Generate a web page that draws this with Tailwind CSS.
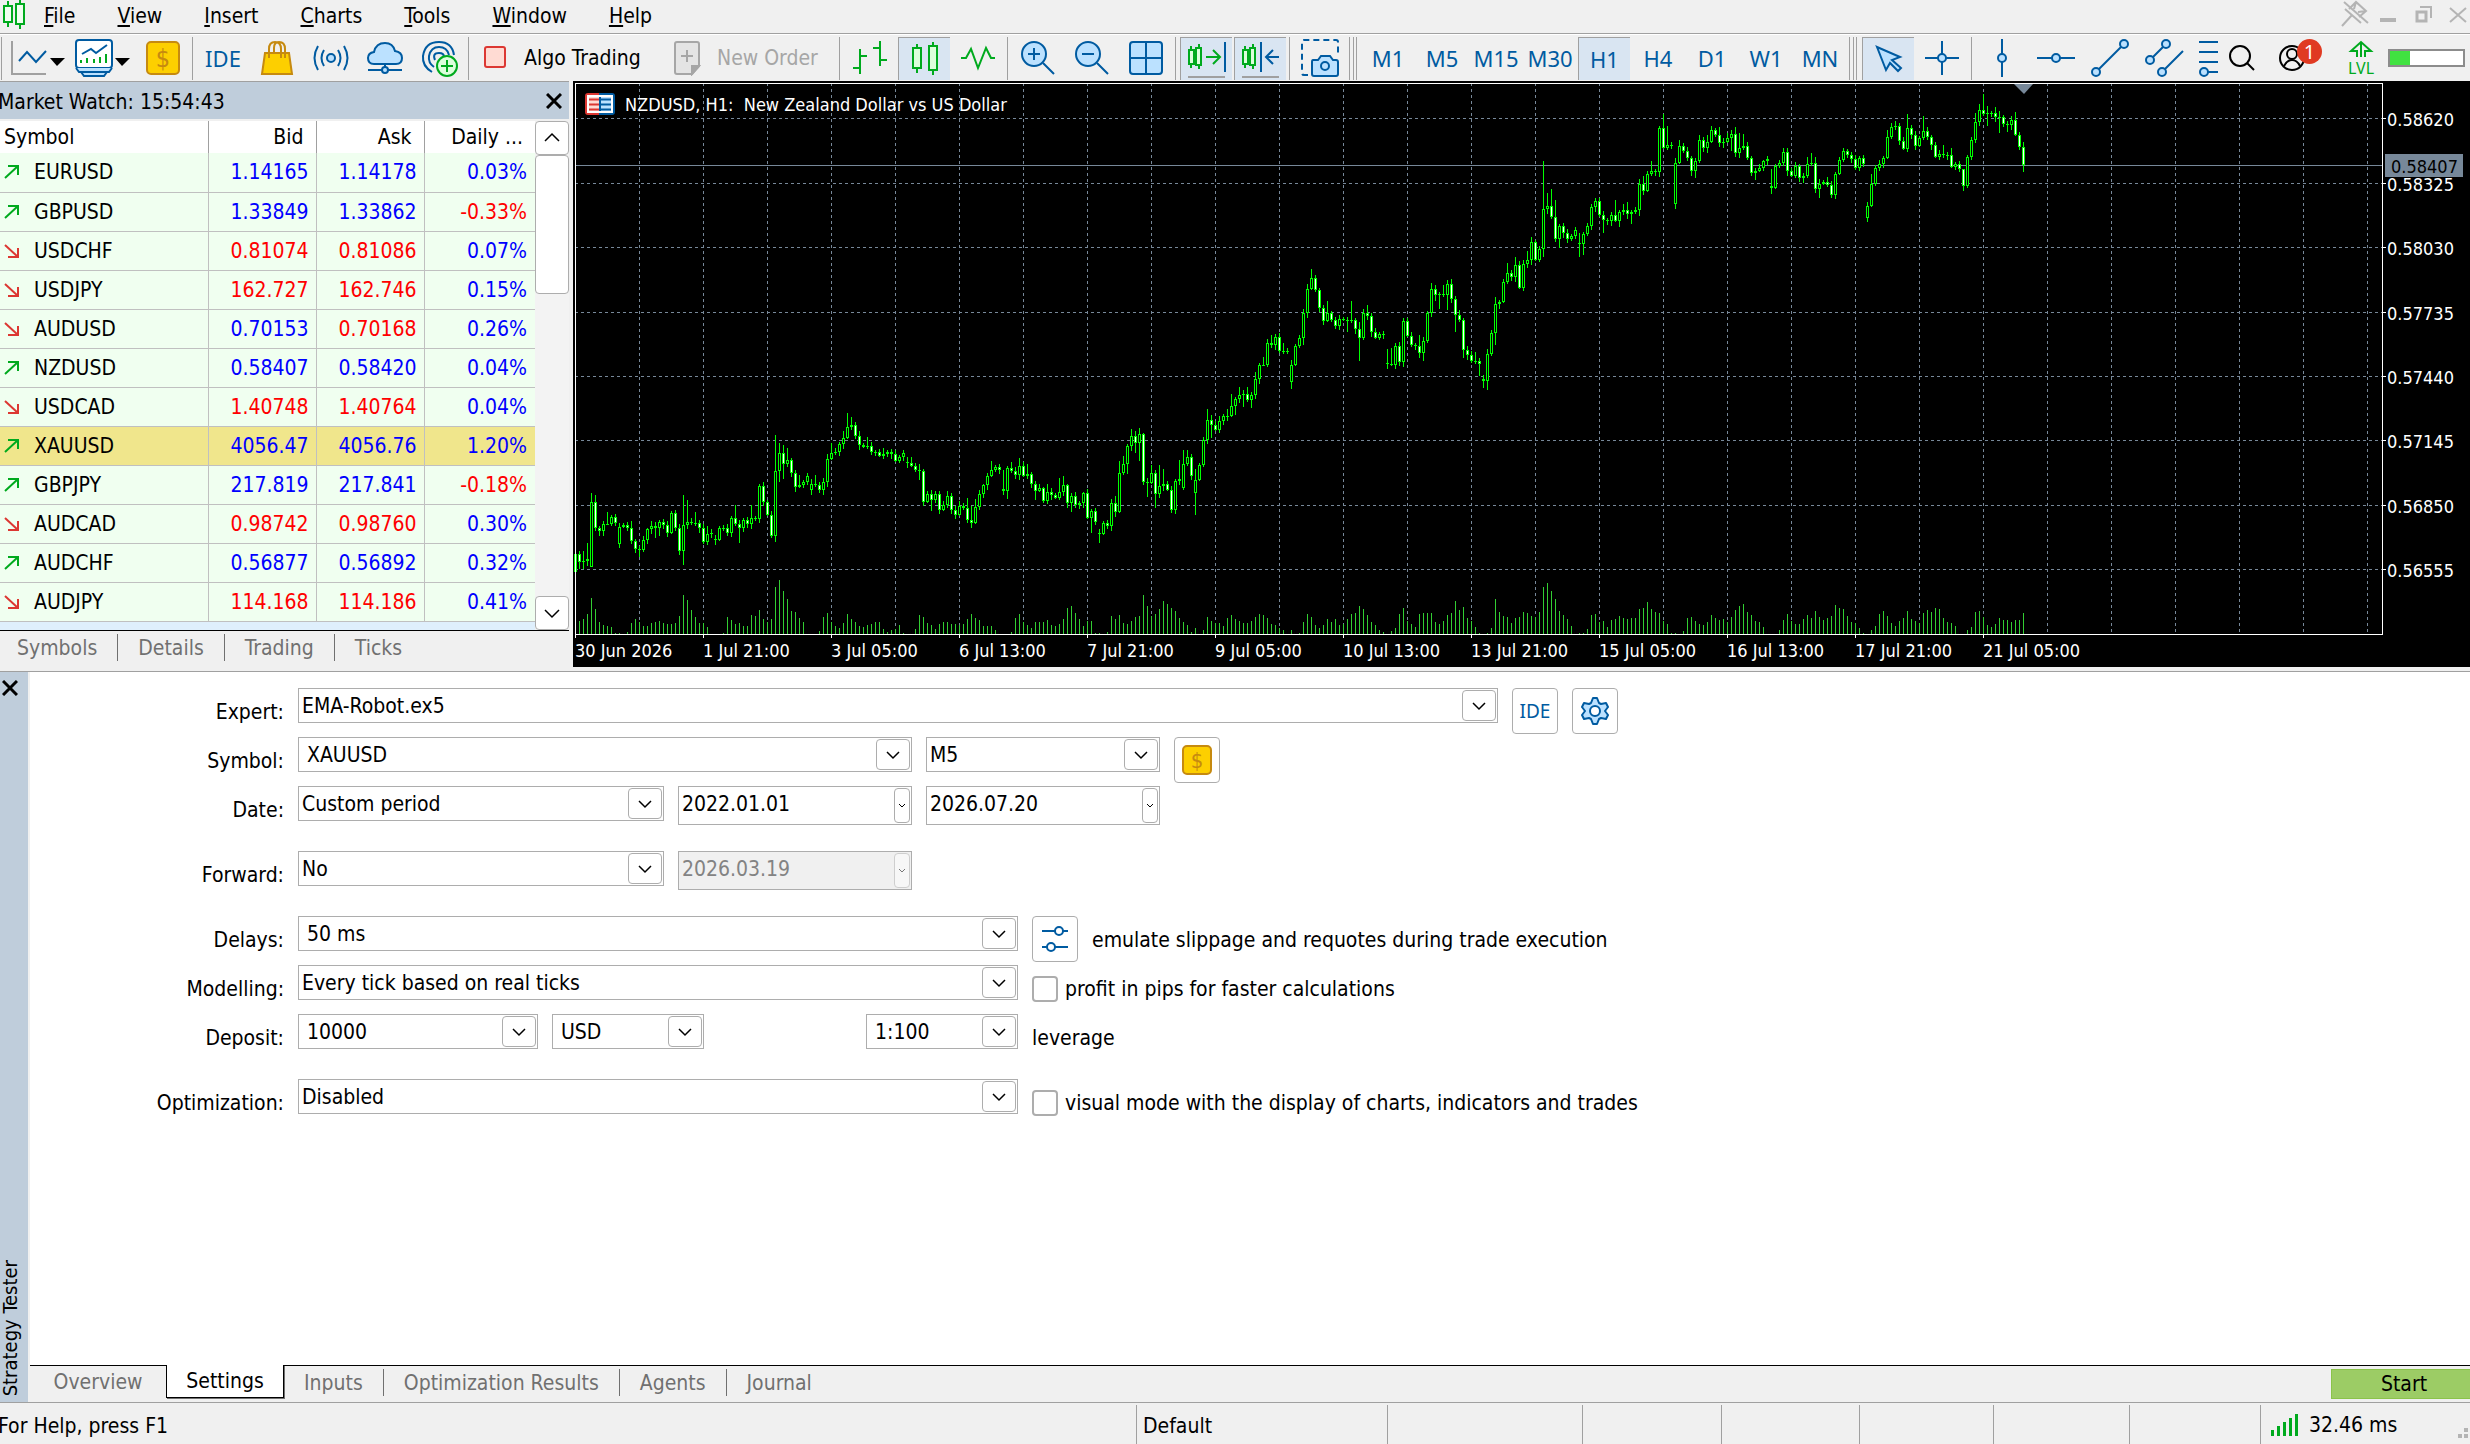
<!DOCTYPE html>
<html lang="en">

<head>
    <meta charset="utf-8" />
    <meta content="width=device-width, initial-scale=1.0" name="viewport" />
    <title>Trading Terminal</title>
    <script src="https://cdn.jsdelivr.net/npm/@tailwindcss/browser@4"></script>
</head>

<body class="h-screen flex flex-col overflow-hidden bg-[#f0f0f0] text-black text-[21px] leading-7 font-['DejaVu_Sans_Condensed','Noto_Sans',sans-serif]">

    <!-- Menu bar -->
    <header class="flex items-center h-[34px] shrink-0 border-b border-[#a0a0a0]">
        <svg class="w-10 h-[33px] shrink-0" viewBox="0 0 40 33" fill="#f0fff0" stroke="#00aa1e" stroke-width="2">
            <path d="M8 1V27M20 0V29" />
            <rect x="4" y="6" width="8" height="16" />
            <rect x="16" y="4" width="8" height="20" />
        </svg>
        <nav class="flex gap-[42px] pl-1 pb-0.5">
            <button><u>F</u>ile</button>
            <button><u>V</u>iew</button>
            <button><u>I</u>nsert</button>
            <button><u>C</u>harts</button>
            <button><u>T</u>ools</button>
            <button><u>W</u>indow</button>
            <button><u>H</u>elp</button>
        </nav>
        <div class="ml-auto flex">
            <button aria-label="Pin" class="w-9">
                <svg class="w-9 h-[33px]" viewBox="0 0 36 33" fill="none" stroke="#b4b4b4" stroke-width="2">
                    <path d="M6 2L30 23M4 26L14 15M7 9L23 23M11 9L18 2L28 11L21 17M18 2L16 9M28 11L20 12" />
                </svg>
            </button>
            <button aria-label="Minimize" class="w-9">
                <svg class="w-9 h-[33px]" viewBox="0 0 36 33"><rect x="6" y="18" width="16" height="4" fill="#b4b4b4" /></svg>
            </button>
            <button aria-label="Restore" class="w-9">
                <svg class="w-9 h-[33px]" viewBox="0 0 36 33" fill="none" stroke="#b4b4b4">
                    <rect x="7" y="12" width="9" height="9" stroke-width="3" />
                    <path d="M10 7H21V18" stroke-width="2" />
                </svg>
            </button>
            <button aria-label="Close" class="w-6">
                <svg class="w-6 h-[33px]" viewBox="0 0 24 33" fill="none" stroke="#b4b4b4" stroke-width="2"><path d="M4 8L20 22M20 8L4 22" /></svg>
            </button>
        </div>
    </header>

    <!-- Toolbar -->
    <div class="flex items-center h-[47px] shrink-0 border-t border-white overflow-hidden">
        <div class="flex items-center flex-1 min-w-0 overflow-hidden">
            <div class="ml-px mr-1.5 w-px h-[43px] shrink-0 bg-[#a0a0a0]"></div>
            <button aria-label="Chart type" class="shrink-0">
                <svg class="w-[62px] h-10" viewBox="0 0 62 40" fill="none">
                    <path d="M4 3V36H38" stroke="#a0a0a0" stroke-width="2" />
                    <path d="M11 23L19 14L28 24L38 13" stroke="#005ba1" stroke-width="2" />
                    <path d="M42 20H57L49 28Z" fill="#000" />
                </svg>
            </button>
            <button aria-label="Profiles" class="shrink-0">
                <svg class="w-[66px] h-10" viewBox="0 0 66 40" fill="none">
                    <g stroke="#005ba1" stroke-width="2">
                        <rect x="6" y="2" width="36" height="28" rx="3" fill="#fff" />
                        <path d="M6 30L9 34H39L42 30M11 34L14 38H34L37 34" fill="#bbe1ff" />
                        <path d="M12 16L21 11L26 15L37 7" />
                    </g>
                    <path d="M11 25V22M17 25V20M24 25V21M30 25V19M36 25V16" stroke="#00aa1e" stroke-width="2" />
                    <path d="M45 20H60L52 28Z" fill="#000" />
                </svg>
            </button>
            <button aria-label="Symbols" class="w-[54px] shrink-0 flex justify-center">
                <svg class="w-10 h-10" viewBox="0 0 40 40">
                    <rect x="4" y="4" width="32" height="32" rx="4" fill="#fdcf00" stroke="#c68a10" stroke-width="2" />
                    <text x="20" y="29" text-anchor="middle" font-size="25" fill="#c68a10">$</text>
                </svg>
            </button>
            <div class="ml-0.5 mr-[3px] w-px h-[43px] shrink-0 bg-[#a0a0a0]"></div>
            <button class="w-[54px] shrink-0 text-[#005ba1] text-[22px] font-['Noto_Sans',sans-serif]">IDE</button>
            <button aria-label="Market" class="w-[54px] shrink-0 flex justify-center">
                <svg class="w-10 h-10" viewBox="0 0 40 40" fill="none" stroke="#c68a10" stroke-width="2">
                    <path d="M8 15H32L35 36H5Z" fill="#fdcf00" />
                    <path d="M12 20V11Q12 4 18 4Q24 4 24 11V20M17 15V10Q17 4 22 4Q28 4 28 11V20" />
                </svg>
            </button>
            <button aria-label="Signals" class="w-[54px] shrink-0 flex justify-center">
                <svg class="w-10 h-10" viewBox="0 0 40 40" fill="none" stroke="#005ba1" stroke-width="2">
                    <circle cx="20" cy="20" r="4" fill="#bbe1ff" />
                    <path d="M13 12Q8 20 13 28M27 12Q32 20 27 28M7 8Q0 20 7 32M33 8Q40 20 33 32" />
                </svg>
            </button>
            <button aria-label="VPS" class="w-[54px] shrink-0 flex justify-center">
                <svg class="w-10 h-10" viewBox="0 0 40 40" fill="none" stroke="#005ba1" stroke-width="2">
                    <path d="M9 26Q3 26 3 20Q3 15 9 14Q11 5 20 5Q28 5 30 13Q37 14 37 20Q37 26 31 26Z" fill="#bbe1ff" />
                    <path d="M20 26V30M3 32H17M23 32H37" />
                    <circle cx="20" cy="32" r="3" fill="#bbe1ff" />
                </svg>
            </button>
            <button aria-label="Copy signal" class="w-[54px] shrink-0 flex justify-center">
                <svg class="w-10 h-10" viewBox="0 0 40 40" fill="none" stroke="#005ba1" stroke-width="2">
                    <path d="M13 34Q3 28 4 18Q6 4 20 4Q33 4 35 17" />
                    <path d="M15 29Q9 25 10 18Q12 9 20 9Q28 9 30 17" />
                    <path d="M16 22Q13 15 20 15Q25 15 25 19" />
                    <circle cx="28" cy="28" r="10" fill="#dcffdc" stroke="#00aa1e" />
                    <path d="M28 22V34M22 28H34" stroke="#00aa1e" />
                </svg>
            </button>
            <div class="ml-0.5 mr-[3px] w-px h-[43px] shrink-0 bg-[#a0a0a0]"></div>
            <div class="flex items-center w-[367px] shrink-0">
                <button class="w-[201px] flex items-center gap-4 pl-3">
                    <svg class="w-6 h-6" viewBox="0 0 24 24"><rect x="1" y="1" width="20" height="20" rx="2" fill="#ffdbd3" stroke="#dc3732" stroke-width="2" /></svg>
                    Algo Trading
                </button>
                <button class="flex items-center gap-4 text-[#a6a6a6] whitespace-nowrap">
                    <svg class="w-7 h-9" viewBox="0 0 28 36" fill="none" stroke="#a6a6a6" stroke-width="2">
                        <path d="M4 2H24Q26 2 26 4V26L19 34H4Q2 34 2 32V4Q2 2 4 2Z" fill="#e4e4e4" />
                        <path d="M19 34V26H26Z" fill="#a6a6a6" />
                        <path d="M14 10V22M8 16H20" />
                    </svg>
                    New Order
                </button>
            </div>
            <div class="mr-[3px] w-px h-[43px] shrink-0 bg-[#a0a0a0]"></div>
            <button aria-label="Bar chart" class="w-[54px] shrink-0 flex justify-center">
                <svg class="w-10 h-10" viewBox="0 0 40 40" fill="none" stroke="#00aa1e" stroke-width="2">
                    <path d="M10 11V36M10 18H17M3 30H10M30 3V28M30 22H37M23 10H30" />
                </svg>
            </button>
            <button aria-label="Candlesticks" class="w-[52px] mx-px h-[43px] shrink-0 flex items-center justify-center bg-[#d9e5f2] border-t border-l border-[#a0a0a0]">
                <svg class="w-10 h-10" viewBox="0 0 40 40" fill="#dcffdc" stroke="#00aa1e" stroke-width="2">
                    <path d="M12 5V34M28 3V36" />
                    <rect x="8" y="9" width="8" height="20" />
                    <rect x="24" y="7" width="8" height="24" />
                </svg>
            </button>
            <button aria-label="Line chart" class="w-[54px] shrink-0 flex justify-center">
                <svg class="w-10 h-10" viewBox="0 0 40 40" fill="none" stroke="#00aa1e" stroke-width="2">
                    <path d="M3 20H8L13 11L20 30L28 10L33 20H37" />
                </svg>
            </button>
            <div class="ml-0.5 mr-[3px] w-px h-[43px] shrink-0 bg-[#a0a0a0]"></div>
            <button aria-label="Zoom in" class="w-[54px] shrink-0 flex justify-center">
                <svg class="w-10 h-10" viewBox="0 0 40 40" fill="none" stroke="#005ba1" stroke-width="2">
                    <circle cx="16" cy="16" r="12" fill="#bbe1ff" />
                    <path d="M16 10V22M10 16H22M25 25L36 36" />
                </svg>
            </button>
            <button aria-label="Zoom out" class="w-[54px] shrink-0 flex justify-center">
                <svg class="w-10 h-10" viewBox="0 0 40 40" fill="none" stroke="#005ba1" stroke-width="2">
                    <circle cx="16" cy="16" r="12" fill="#bbe1ff" />
                    <path d="M10 16H22M25 25L36 36" />
                </svg>
            </button>
            <button aria-label="Tile windows" class="w-[54px] shrink-0 flex justify-center">
                <svg class="w-10 h-10" viewBox="0 0 40 40" fill="none" stroke="#005ba1" stroke-width="2">
                    <rect x="4" y="4" width="32" height="32" rx="3" fill="#bbe1ff" />
                    <path d="M20 4V36M4 20H36" />
                </svg>
            </button>
            <div class="ml-0.5 mr-[3px] w-px h-[43px] shrink-0 bg-[#a0a0a0]"></div>
            <button aria-label="Auto scroll" class="w-[52px] mx-px h-[43px] shrink-0 flex items-center justify-center bg-[#d9e5f2] border-t border-l border-[#a0a0a0]">
                <svg class="w-10 h-10" viewBox="0 0 40 40" fill="none" stroke="#00aa1e" stroke-width="2">
                    <path d="M4 7V29M12 5V30M19 18H32M26 11L33 18L26 25" />
                    <rect x="2" y="11" width="5" height="14" fill="#dcffdc" />
                    <rect x="9" y="9" width="5" height="17" fill="#dcffdc" />
                    <path d="M38 3V33" stroke="#005ba1" />
                    <path d="M1 38H38" stroke="#a0a0a0" />
                </svg>
            </button>
            <button aria-label="Chart shift" class="w-[52px] mx-px h-[43px] shrink-0 flex items-center justify-center bg-[#d9e5f2] border-t border-l border-[#a0a0a0]">
                <svg class="w-10 h-10" viewBox="0 0 40 40" fill="none" stroke="#00aa1e" stroke-width="2">
                    <path d="M4 7V29M12 5V30" />
                    <rect x="2" y="11" width="5" height="14" fill="#dcffdc" />
                    <rect x="9" y="9" width="5" height="17" fill="#dcffdc" />
                    <path d="M20 3V33M26 18H38M32 11L25 18L32 25" stroke="#005ba1" />
                    <path d="M1 38H38" stroke="#a0a0a0" />
                </svg>
            </button>
            <div class="ml-0.5 mr-[3px] w-px h-[43px] shrink-0 bg-[#a0a0a0]"></div>
            <button aria-label="Screenshot" class="w-[54px] shrink-0 flex justify-center">
                <svg class="w-10 h-10" viewBox="0 0 40 40" fill="none" stroke="#005ba1" stroke-width="2">
                    <path d="M8 37H4Q2 37 2 35V4Q2 2 4 2H36Q38 2 38 4V16" stroke-dasharray="6 4" />
                    <path d="M13 22H18L21 18H30L33 22H36Q38 22 38 24V36Q38 38 36 38H14Q12 38 12 36V24Q12 22 13 22Z" fill="#bbe1ff" />
                    <circle cx="25" cy="28" r="4" />
                </svg>
            </button>
            <div class="ml-0.5 mr-1 w-2 h-[43px] shrink-0 border-x border-[#a0a0a0] flex justify-center"><div class="w-px bg-[#a0a0a0]"></div></div>
            <div class="flex shrink-0 text-[#005ba1] text-[22px] font-['Noto_Sans',sans-serif]">
                <button class="w-[54px]">M1</button>
                <button class="w-[54px]">M5</button>
                <button class="w-[54px]">M15</button>
                <button class="w-[54px]">M30</button>
                <button class="w-[52px] mx-px h-[43px] bg-[#d9e5f2] border-t border-l border-[#a0a0a0]">H1</button>
                <button class="w-[54px]">H4</button>
                <button class="w-[54px]">D1</button>
                <button class="w-[54px]">W1</button>
                <button class="w-[54px]">MN</button>
            </div>
            <div class="ml-0.5 mr-1 w-2 h-[43px] shrink-0 border-x border-[#a0a0a0] flex justify-center"><div class="w-px bg-[#a0a0a0]"></div></div>
            <button aria-label="Cursor" class="w-[52px] mx-px h-[43px] shrink-0 flex items-center justify-center bg-[#d9e5f2] border-t border-l border-[#a0a0a0]">
                <svg class="w-10 h-10" viewBox="0 0 40 40" fill="#bbe1ff" stroke="#005ba1" stroke-width="2">
                    <path d="M8 8L31 18L23 21L32 29L29 32L21 24L17 31Z" />
                </svg>
            </button>
            <button aria-label="Crosshair" class="w-[54px] shrink-0 flex justify-center">
                <svg class="w-10 h-10" viewBox="0 0 40 40" fill="#bbe1ff" stroke="#005ba1" stroke-width="2">
                    <path d="M20 3V37M3 20H37" /><circle cx="20" cy="20" r="4" />
                </svg>
            </button>
            <div class="ml-0.5 mr-[3px] w-px h-[43px] shrink-0 bg-[#a0a0a0]"></div>
            <button aria-label="Vertical line" class="w-[54px] shrink-0 flex justify-center">
                <svg class="w-10 h-10" viewBox="0 0 40 40" fill="#bbe1ff" stroke="#005ba1" stroke-width="2">
                    <path d="M20 1V39" /><circle cx="20" cy="20" r="4" />
                </svg>
            </button>
            <button aria-label="Horizontal line" class="w-[54px] shrink-0 flex justify-center">
                <svg class="w-10 h-10" viewBox="0 0 40 40" fill="#bbe1ff" stroke="#005ba1" stroke-width="2">
                    <path d="M1 20H39" /><circle cx="20" cy="20" r="4" />
                </svg>
            </button>
            <button aria-label="Trendline" class="w-[54px] shrink-0 flex justify-center">
                <svg class="w-10 h-10" viewBox="0 0 40 40" fill="#bbe1ff" stroke="#005ba1" stroke-width="2">
                    <path d="M6 34L34 6" /><circle cx="6" cy="34" r="4" /><circle cx="34" cy="6" r="4" />
                </svg>
            </button>
            <button aria-label="Channel" class="w-[54px] shrink-0 flex justify-center">
                <svg class="w-10 h-10" viewBox="0 0 40 40" fill="#bbe1ff" stroke="#005ba1" stroke-width="2">
                    <path d="M6 22L22 6M18 34L39 13" /><circle cx="6" cy="22" r="4" /><circle cx="22" cy="6" r="4" /><circle cx="18" cy="34" r="4" />
                </svg>
            </button>
            <button aria-label="Fibonacci" class="w-[54px] shrink-0 flex justify-center">
                <svg class="w-10 h-10" viewBox="0 0 40 40" fill="#bbe1ff" stroke="#005ba1" stroke-width="2">
                    <path d="M1 4H39M1 14H39M1 24H39M6 34H39" /><circle cx="6" cy="34" r="4" />
                </svg>
            </button>
        </div>
        <div class="flex items-center shrink-0 w-[252px]">
            <button aria-label="Search" class="w-12 pl-2">
                <svg class="w-10 h-10" viewBox="0 0 40 40" fill="none" stroke="#000" stroke-width="2">
                    <circle cx="14" cy="18" r="10" /><path d="M21 25L28 32" />
                </svg>
            </button>
            <button aria-label="Account" class="relative w-[74px] pl-3">
                <svg class="w-10 h-10" viewBox="0 0 40 40" fill="none" stroke="#000" stroke-width="2">
                    <circle cx="14" cy="20" r="12" /><circle cx="14" cy="16" r="5" /><path d="M6 28Q9 22 14 22Q19 22 22 28" />
                </svg>
                <span class="absolute left-[31px] top-px size-[25px] rounded-full bg-[#e03a22] text-white text-[20px] leading-[25px] font-['Noto_Sans',sans-serif]">1</span>
            </button>
            <button aria-label="Level" class="w-12">
                <svg class="w-12 h-10" viewBox="0 0 48 40">
                    <path d="M17 19V13H11L21 4L31 13H25V19M21 5V19" fill="none" stroke="#00aa1e" stroke-width="2" />
                    <text x="21" y="36" text-anchor="middle" font-size="16" fill="#00aa1e" font-family="Noto Sans, sans-serif">LVL</text>
                </svg>
            </button>
            <div class="w-[77px] h-[18px] border-2 border-[#8c8c8c] bg-white">
                <div class="w-5 h-full bg-[#41e241]"></div>
            </div>
        </div>
    </div>

    <!-- Market watch and chart -->
    <main class="flex h-[590px] shrink-0">
        <section class="w-[569px] shrink-0 border-t border-[#a0a0a0]">
            <div class="flex items-center justify-between h-[37px] bg-[#bfcddb]">
                <h2 class="-ml-0.5 pt-0.5">Market Watch: 15:54:43</h2>
                <button aria-label="Close Market Watch" class="pr-[7px]">
                    <svg class="w-4 h-4" viewBox="0 0 16 16" stroke="#000" stroke-width="3"><path d="M1 1L15 15M15 1L1 15" /></svg>
                </button>
            </div>
            <div class="flex h-[510px] mt-0.5 border-b border-black bg-white">
                <div class="flex-1 overflow-hidden bg-[#dfeffc]">
                    <table class="w-full table-fixed border-collapse">
                        <thead>
                            <tr class="h-8 bg-white text-right">
                                <th class="w-[208px] border-r border-[#a0a0a0] font-normal text-left pl-1 py-0">Symbol</th>
                                <th class="w-[108px] border-r border-[#a0a0a0] font-normal pr-3 py-0">Bid</th>
                                <th class="w-[108px] border-r border-[#a0a0a0] font-normal pr-3 py-0">Ask</th>
                                <th class="font-normal pr-3 py-0">Daily ...</th>
                            </tr>
                        </thead>
                        <tbody id="quotes"></tbody>
                    </table>
                </div>
                <div class="w-[34px] flex flex-col bg-[#f3f3f3]">
                    <button aria-label="Scroll up" class="h-[34px] border border-[#adadad] rounded-sm bg-white flex items-center justify-center">
                        <svg class="w-4 h-4" viewBox="0 0 16 16" fill="none" stroke="#000" stroke-width="1.5"><path d="M1 11L8 4L15 11" /></svg>
                    </button>
                    <div class="h-[139px] border border-[#adadad] rounded-sm bg-white"></div>
                    <button aria-label="Scroll down" class="mt-auto h-[34px] border border-[#adadad] rounded-sm bg-white flex items-center justify-center">
                        <svg class="w-4 h-4" viewBox="0 0 16 16" fill="none" stroke="#000" stroke-width="1.5"><path d="M1 5L8 12L15 5" /></svg>
                    </button>
                </div>
            </div>
            <div class="flex pt-[3px] text-[#707070] divide-x divide-[#707070]">
                <button class="pl-[17px] pr-5 h-[27px] leading-6">Symbols</button>
                <button class="px-5 h-[27px] leading-6">Details</button>
                <button class="px-5 h-[27px] leading-6">Trading</button>
                <button class="px-5 h-[27px] leading-6">Ticks</button>
            </div>
        </section>
        <section class="flex-1 min-w-0 ml-1">
            <svg id="chart" class="block w-full h-[586px] bg-black" font-size="18"></svg>
        </section>
    </main>

    <!-- Strategy tester -->
    <section class="flex flex-1 min-h-0 border-t border-[#a0a0a0]">
        <div class="w-7 shrink-0 flex flex-col justify-between items-start bg-[#bfcddb] mr-0.5">
            <button aria-label="Close Strategy Tester" class="pt-2 pl-0.5">
                <svg class="w-4 h-4" viewBox="0 0 16 16" stroke="#000" stroke-width="3"><path d="M1 1L15 15M15 1L1 15" /></svg>
            </button>
            <h2 class="[writing-mode:vertical-rl] rotate-180 whitespace-nowrap text-[20px] leading-5 pt-1.5">Strategy Tester</h2>
        </div>
        <div class="flex-1 min-w-0 flex flex-col">
            <form class="flex-1 bg-white pt-4">
                <div class="flex gap-3.5 h-[49px]">
                    <label for="expert" class="w-[254px] leading-12 text-right">Expert:</label>
                    <div class="relative w-[1200px] h-[35px]">
                        <select id="expert" class="appearance-none w-full h-full pl-[3px] pt-px border border-[#adadad] bg-white"><option>EMA-Robot.ex5</option></select>
                        <span class="chev"></span>
                    </div>
                    <button type="button" class="size-[46px] border border-[#adadad] rounded-sm text-[#005ba1] text-[19px] font-['Noto_Sans',sans-serif]">IDE</button>
                    <button type="button" aria-label="Expert settings" class="size-[46px] border border-[#adadad] rounded-sm flex items-center justify-center">
                        <svg class="w-7 h-7" viewBox="0 0 28 28" fill="#bbe1ff" stroke="#005ba1" stroke-width="2">
                            <path d="M12 1H16L18 6L20 7L25 6L27 10L24 14L27 18L25 22L20 21L18 22L16 27H12L10 22L8 21L3 22L1 18L4 14L1 10L3 6L8 7L10 6Z" stroke-linejoin="round" />
                            <circle cx="14" cy="14" r="5" fill="#fff" />
                        </svg>
                    </button>
                </div>
                <div class="flex gap-3.5 h-[49px]">
                    <label for="symbol" class="w-[254px] leading-12 text-right">Symbol:</label>
                    <div class="relative w-[614px] h-[35px]">
                        <select id="symbol" class="appearance-none w-full h-full pl-2 pt-px border border-[#adadad] bg-white"><option>XAUUSD</option></select>
                        <span class="chev"></span>
                    </div>
                    <div class="relative w-[234px] h-[35px]">
                        <select aria-label="Timeframe" class="appearance-none w-full h-full pl-[3px] pt-px border border-[#adadad] bg-white"><option>M5</option></select>
                        <span class="chev"></span>
                    </div>
                    <button type="button" aria-label="Symbol settings" class="size-[46px] border border-[#adadad] rounded-sm flex items-center justify-center">
                        <svg class="w-8 h-8" viewBox="0 0 32 32">
                            <rect x="2" y="2" width="28" height="28" rx="4" fill="#fdcf00" stroke="#c68a10" stroke-width="2" />
                            <text x="16" y="24" text-anchor="middle" font-size="22" fill="#c68a10">$</text>
                        </svg>
                    </button>
                </div>
                <div class="flex gap-3.5 h-[49px] mb-4">
                    <label for="date" class="w-[254px] leading-12 text-right">Date:</label>
                    <div class="relative w-[366px] h-[35px]">
                        <select id="date" class="appearance-none w-full h-full pl-[3px] pt-px border border-[#adadad] bg-white"><option>Custom period</option></select>
                        <span class="chev"></span>
                    </div>
                    <div class="relative w-[234px] h-[39px]">
                        <input aria-label="From date" type="text" value="2022.01.01" class="w-full h-full pl-[3px] pb-1 border border-[#adadad] bg-white" />
                        <span class="chev-sm"></span>
                    </div>
                    <div class="relative w-[234px] h-[39px]">
                        <input aria-label="To date" type="text" value="2026.07.20" class="w-full h-full pl-[3px] pb-1 border border-[#adadad] bg-white" />
                        <span class="chev-sm"></span>
                    </div>
                </div>
                <div class="flex gap-3.5 h-[49px] mb-4">
                    <label for="forward" class="w-[254px] leading-12 text-right">Forward:</label>
                    <div class="relative w-[366px] h-[35px]">
                        <select id="forward" class="appearance-none w-full h-full pl-[3px] pt-px border border-[#adadad] bg-white"><option>No</option></select>
                        <span class="chev"></span>
                    </div>
                    <div class="relative w-[234px] h-[39px]">
                        <input aria-label="Forward date" type="text" value="2026.03.19" disabled class="w-full h-full pl-[3px] pb-1 border border-[#adadad] bg-[#f0f0f0] text-[#838383]" />
                        <span class="chev-sm opacity-50"></span>
                    </div>
                </div>
                <div class="flex gap-3.5 h-[49px]">
                    <label for="delays" class="w-[254px] leading-12 text-right">Delays:</label>
                    <div class="relative w-[720px] h-[35px]">
                        <select id="delays" class="appearance-none w-full h-full pl-2 pt-px border border-[#adadad] bg-white"><option>50 ms</option></select>
                        <span class="chev"></span>
                    </div>
                    <button type="button" aria-label="Delay settings" class="size-[46px] border border-[#adadad] rounded-sm flex items-center justify-center">
                        <svg class="w-7 h-7" viewBox="0 0 28 28" fill="#fff" stroke="#005ba1" stroke-width="2">
                            <path d="M1 6H27M1 22H27" /><circle cx="18" cy="6" r="4" /><circle cx="10" cy="22" r="4" />
                        </svg>
                    </button>
                    <span class="leading-12">emulate slippage and requotes during trade execution</span>
                </div>
                <div class="flex gap-3.5 h-[49px]">
                    <label for="modelling" class="w-[254px] leading-12 text-right">Modelling:</label>
                    <div class="relative w-[720px] h-[35px]">
                        <select id="modelling" class="appearance-none w-full h-full pl-[3px] pt-px border border-[#adadad] bg-white"><option>Every tick based on real ticks</option></select>
                        <span class="chev"></span>
                    </div>
                    <label class="flex items-center gap-[7px] h-12">
                        <input type="checkbox" class="appearance-none size-[26px] border-2 border-[#adadad] rounded-sm bg-white" />
                        profit in pips for faster calculations
                    </label>
                </div>
                <div class="flex gap-3.5 h-[49px] mb-4">
                    <label for="deposit" class="w-[254px] leading-12 text-right">Deposit:</label>
                    <div class="flex justify-between w-[720px]">
                        <div class="flex gap-3.5">
                            <div class="relative w-[240px] h-[35px]">
                                <select id="deposit" class="appearance-none w-full h-full pl-2 pt-px border border-[#adadad] bg-white"><option>10000</option></select>
                                <span class="chev"></span>
                            </div>
                            <div class="relative w-[152px] h-[35px]">
                                <select aria-label="Currency" class="appearance-none w-full h-full pl-2 pt-px border border-[#adadad] bg-white"><option>USD</option></select>
                                <span class="chev"></span>
                            </div>
                        </div>
                        <div class="relative w-[152px] h-[35px]">
                            <select id="leverage" class="appearance-none w-full h-full pl-2 pt-px border border-[#adadad] bg-white"><option>1:100</option></select>
                            <span class="chev"></span>
                        </div>
                    </div>
                    <label for="leverage" class="leading-12">leverage</label>
                </div>
                <div class="flex gap-3.5 h-[49px]">
                    <label for="optimization" class="w-[254px] leading-12 text-right">Optimization:</label>
                    <div class="relative w-[720px] h-[35px]">
                        <select id="optimization" class="appearance-none w-full h-full pl-[3px] pt-px border border-[#adadad] bg-white"><option>Disabled</option></select>
                        <span class="chev"></span>
                    </div>
                    <label class="flex items-center gap-[7px] h-12">
                        <input type="checkbox" class="appearance-none size-[26px] border-2 border-[#adadad] rounded-sm bg-white" />
                        visual mode with the display of charts, indicators and trades
                    </label>
                </div>
            </form>
            <div class="flex h-[37px] shrink-0 text-[#707070]">
                <button class="w-[136px] border-t border-black pb-1">Overview</button>
                <button class="w-[118px] h-[33px] border-x border-b border-black bg-white text-black shadow-[1px_1px_0_#707070]">Settings</button>
                <div class="flex flex-1 border-t border-black pt-[3px]">
                    <button class="px-5 h-[27px] leading-6 border-r border-[#707070]">Inputs</button>
                    <button class="px-5 h-[27px] leading-6 border-r border-[#707070]">Optimization Results</button>
                    <button class="px-5 h-[27px] leading-6 border-r border-[#707070]">Agents</button>
                    <button class="px-5 h-[27px] leading-6">Journal</button>
                    <button class="ml-auto w-[139px] h-[30px] pl-1.5 border border-r-0 border-[#8bc34a] bg-[#9ccc65] text-black">Start</button>
                </div>
            </div>
        </div>
    </section>

    <!-- Status bar -->
    <footer class="flex h-[42px] shrink-0 border-t border-[#a0a0a0] pt-0.5 leading-[42px] divide-x divide-[#a0a0a0] overflow-hidden">
        <div class="flex-1"><span class="-ml-0.5">For Help, press F1</span></div>
        <div class="w-[251px] pl-1.5">Default</div>
        <div class="w-[195px]"></div>
        <div class="w-[139px]"></div>
        <div class="w-[138px]"></div>
        <div class="w-[134px]"></div>
        <div class="w-[136px]"></div>
        <div class="w-[131px]"></div>
        <div class="w-[209px] flex items-center gap-2.5 pl-2.5">
            <svg class="w-7 h-6" viewBox="0 0 28 24" fill="#00aa1e">
                <rect x="0" y="17" width="3" height="6" /><rect x="6" y="13" width="3" height="10" /><rect x="12" y="9" width="3" height="14" /><rect x="18" y="5" width="3" height="18" /><rect x="24" y="1" width="3" height="22" />
            </svg>
            <span>32.46 ms</span>
            <svg class="w-4 h-4 ml-auto self-end" viewBox="0 0 16 16" fill="#b4b4b4">
                <rect x="10" y="0" width="4" height="4" /><rect x="4" y="6" width="4" height="4" /><rect x="10" y="6" width="4" height="4" />
            </svg>
        </div>
    </footer>

    <script>
        // symbol, direction, bid, bid colour, ask, ask colour, daily change
        const quotes = [
            ["EURUSD", "u", "1.14165", "u", "1.14178", "u", "0.03%"],
            ["GBPUSD", "u", "1.33849", "u", "1.33862", "u", "-0.33%"],
            ["USDCHF", "d", "0.81074", "d", "0.81086", "d", "0.07%"],
            ["USDJPY", "d", "162.727", "d", "162.746", "d", "0.15%"],
            ["AUDUSD", "d", "0.70153", "u", "0.70168", "d", "0.26%"],
            ["NZDUSD", "u", "0.58407", "u", "0.58420", "u", "0.04%"],
            ["USDCAD", "d", "1.40748", "d", "1.40764", "d", "0.04%"],
            ["XAUUSD", "u", "4056.47", "u", "4056.76", "u", "1.20%"],
            ["GBPJPY", "u", "217.819", "u", "217.841", "u", "-0.18%"],
            ["AUDCAD", "d", "0.98742", "d", "0.98760", "d", "0.30%"],
            ["AUDCHF", "u", "0.56877", "u", "0.56892", "u", "0.32%"],
            ["AUDJPY", "d", "114.168", "d", "114.186", "d", "0.41%"],
        ];
        const color = { u: "text-[#0000ff]", d: "text-[#ff0000]" };
        const arrow = {
            u: '<svg class="w-4 h-4 shrink-0" viewBox="0 0 16 16" fill="none" stroke="#00aa1e" stroke-width="2"><path d="M1 14L14 2M4 2H14V11" /></svg>',
            d: '<svg class="w-4 h-4 shrink-0" viewBox="0 0 16 16" fill="none" stroke="#dc3732" stroke-width="2"><path d="M1 2L14 14M4 14H14V5" /></svg>',
        };
        document.getElementById("quotes").innerHTML = quotes.map(q => `
            <tr class="h-[39px] border-b border-[#c0c0c0] text-right ${q[0] === "XAUUSD" ? "bg-[#f0e68c]" : "bg-[#f0fff0]"}">
                <td class="border-r border-[#c0c0c0] p-0"><div class="flex items-center gap-3.5 pl-1">${arrow[q[1]]}${q[0]}</div></td>
                <td class="border-r border-[#c0c0c0] py-0 pr-[7px] ${color[q[3]]}">${q[2]}</td>
                <td class="border-r border-[#c0c0c0] py-0 pr-[7px] ${color[q[5]]}">${q[4]}</td>
                <td class="py-0 pr-2 ${q[6][0] === "-" ? color.d : color.u}">${q[6]}</td>
            </tr>`).join("");

        // Drop-down arrows
        document.querySelectorAll(".chev").forEach(el => {
            el.className = "absolute right-0.5 top-0.5 bottom-0.5 w-[34px] border border-[#adadad] rounded-sm bg-white flex items-center justify-center pointer-events-none";
            el.innerHTML = '<svg class="w-3.5 h-3.5" viewBox="0 0 14 14" fill="none" stroke="#000" stroke-width="1.5"><path d="M1 4L7 10L13 4" /></svg>';
        });
        document.querySelectorAll(".chev-sm").forEach(el => {
            el.className = "absolute right-0.5 top-0.5 bottom-0.5 w-4 border border-[#adadad] rounded-sm bg-white flex items-center justify-center pointer-events-none" + (el.classList.contains("opacity-50") ? " opacity-50" : "");
            el.innerHTML = '<svg class="w-2 h-2" viewBox="0 0 8 8" fill="none" stroke="#000"><path d="M1 2L4 5L7 2" /></svg>';
        });

        // Candles: close,high,low,open counted in ticks down from the top of the scale
        const candles = `1240,,,1285 1260,,1278 1258,1232,1278 1253,1210 1104,1079,1274,1272 1172,1085 1180,,1192 1160,1152 1160,1129 1142 1157 1168,,,1212 1163 1172 1204,1152 1225 1229,,1247 1203 1175 1167,1152
            1172,,1196 1155,1150,1193 1164 1183 1132,1126 1172 1232 1163,1085,1267 1156,1098,1175 1158 1158,1129 1172 1209 1187,1166 1183 1203,,,1200 1172 1172 1183 1145
            1162,1111 1172,,1210 1150 1160 1145,1112,1175 1148 1062,1056 1103 1136 1192 1023,928,1207 975,949,1050 1005,954,1042 993,962 1028 1064 1060,1032 1050 1036 1055,,,1073
            1060,1032 1073 1052,,1085 991,977 975,949 973 952 936,917 908,870 903,881 930 955 960 957,933 972 972 984 978,962 973 978
            995 986 975 1002,,,998 1010,985 1020 1023,1004,1045 1102 1083 1098,,1126 1083,1074 1123 1112 1087,1074 1125 1136,1115 1115,1100 1118 1150,1092 1158,1113
            1117,1095 1083 1060 1036 1020,996 1012 1020 1075,1020,1085,1070 1015,,1095 1022,998 1033 1008,988 1036,998 1030,1004 1057 1075,,1097 1068 1100 1078,1056 1086
            1093 1078,1040 1060,1035 1106 1088,,1129 1112 1106 1080,1077 1145 1127,,1184 1155 1187,,1210,1185 1157 1167 1106,,1178 1130,1088 1028,996 1003,983 957,,1029 932,912
            948,917,975 925,909,996 1052,923,1060 1053,,1091 1028,1006 1083,,1118 1062,1006 1056,1018 1072 1125,,1131 1048 1042,993 1004,967,,1068 986,967 1036 1046,1018,1136,1080 1007 942 889,860 901,875,936
            916 893,878 879 878,860 853,821 835,,875 824,802 822,,855 838,802 824,,857 782,763 745 745,724 688 693,668 672,664 710 708,688 708 745,732,808,791
            696 675 610,,694 547,533 518,494 550,510 597 630 610,578 628 643 625 627 627,,658 628,578 652 675,632,734 610 618,588 660
            675 665 668 744,703,,741 745,700 696,,755 738 630,622,750 670 693 696 714,668 683,,734 610 547,531 562,,578 560,,600 562,537 535,,603 572,520
            615,,658 628,601 705,,726 720 736 735,712 742,,773 787,,805,783 717,703,812,788 662 587,567,692 580 528 505,478 516,498 485,463 545 482,470 472,447 424,410
            471 443 339,213,463 330,295 360,287 417,315 383,,441 402 416,,428 408 393 430,400,464,427 403,,457 383 333,324 317,309 355 367,,400 370 354
            370,315 345,,386 341,324 352,321 346,,378 341 272,,357 290,253 247 238,214 242 126,121 178,91 170,122 173,162 217,,,325 173,157 186 205 240
            212,,258 157 179,149 163,146 132,121 145 166,123 163 153,139 141,,187 192,125 180,139 173,141 205 243 238,,263 232 214 208 283,233,299,278
            225 217 190 240,178 252 226 258 253 220,201 217,193 286,201 272,,309 268 275,254 301 247 210 186,179 197 207
            232 205 220 330,,,361 272,246 231 220 205 150,132 124 121,107 160 182 126,89 145 173 153 134,94 150 171
            203 194 197,170 198 229,180 221 233 278,248 203,,,279 157 110,87 79,63 91,39 87,68,122 88 98,71 98,82,140 117 119,,138 105
            145,86 177 223,,242,175`.trim().split(/\s+/).map(c => c.split(",").map(Number));

        const volumes = [
            0, 35, 39, 52, 94, 66, 32, 24, 21, 19, 3, 3, 0, 5, 29, 39, 32, 21, 20, 29, 32, 35, 30, 27, 25, 29, 47, 102, 89, 62, 45, 29, 29, 19, 0, 0, 0, 3, 45, 37,
            26, 30, 20, 21, 50, 47, 63, 39, 32, 38, 123, 141, 113, 92, 60, 58, 42, 32, 0, 0, 0, 8, 45, 55, 32, 21, 16, 29, 52, 40, 32, 21, 17, 24, 27, 32, 32, 14, 5, 11,
            13, 24, 3, 0, 0, 13, 50, 44, 29, 24, 13, 27, 32, 32, 27, 27, 24, 27, 39, 52, 42, 37, 21, 21, 20, 11, 0, 0, 0, 5, 42, 52, 32, 24, 16, 32, 32, 32, 37, 24,
            20, 27, 40, 68, 73, 55, 39, 20, 34, 34, 3, 2, 0, 5, 47, 39, 50, 29, 26, 33, 45, 47, 102, 73, 47, 52, 65, 86, 79, 68, 60, 42, 32, 24, 5, 16, 0, 11, 45, 34,
            29, 29, 21, 42, 50, 39, 34, 29, 29, 34, 45, 52, 50, 42, 26, 24, 16, 11, 0, 11, 0, 3, 32, 52, 45, 24, 16, 24, 39, 32, 39, 24, 26, 39, 52, 55, 73, 66, 50, 32,
            24, 11, 5, 0, 8, 16, 52, 68, 34, 26, 19, 52, 55, 55, 55, 32, 26, 34, 50, 55, 86, 63, 70, 42, 34, 19, 3, 0, 3, 16, 92, 58, 47, 45, 29, 42, 45, 58, 55, 47,
            45, 58, 123, 133, 113, 92, 60, 50, 39, 21, 0, 3, 3, 13, 50, 52, 32, 34, 19, 37, 39, 47, 42, 39, 42, 42, 66, 68, 84, 66, 58, 55, 34, 26, 3, 3, 0, 8, 42, 45,
            34, 26, 24, 32, 50, 42, 37, 39, 32, 45, 63, 73, 79, 58, 50, 34, 32, 19, 0, 0, 0, 11, 37, 52, 34, 26, 26, 39, 50, 42, 60, 45, 37, 42, 47, 76, 68, 66, 47, 32,
            29, 16, 3, 0, 11, 21, 52, 60, 47, 29, 21, 34, 42, 60, 39, 34, 29, 55, 63, 58, 68, 66, 42, 32, 29, 21, 0, 0, 11, 19, 58, 60, 45, 24, 19, 26, 42, 37, 37, 32,
            37, 37, 55,
        ];
        const prices = ["0.58620", "0.58325", "0.58030", "0.57735", "0.57440", "0.57145", "0.56850", "0.56555"];
        const dates = ["30 Jun 2026", "1 Jul 21:00", "3 Jul 05:00", "6 Jul 13:00", "7 Jul 21:00", "9 Jul 05:00", "10 Jul 13:00", "13 Jul 21:00", "15 Jul 05:00", "16 Jul 13:00", "17 Jul 21:00", "21 Jul 05:00"];

        const chart = document.getElementById("chart");

        function drawChart() {
            const right = Math.round(chart.getBoundingClientRect().width) - 88;
            const left = 2, top = 2, bottom = 553;
            const y = t => Math.round(top + (t - 9) * (bottom - top) / 1439);

            let grid = "", frame = "", wicks = "", bodies = "", cores = "", bars = "", text = "";
            for (let x = left + 64; x < right; x += 64) grid += `M${x}.5 ${top}V${bottom}`;
            prices.forEach((p, i) => {
                const gy = y(101 + i * 168.3);
                grid += `M${left} ${gy}.5H${right}`;
                frame += `M${right} ${gy}.5h4`;
                text += `<text x="${right + 5}" y="${gy + 8}">${p}</text>`;
            });
            dates.forEach((d, i) => {
                const x = left + i * 128;
                frame += `M${x}.5 ${bottom}v4`;
                text += `<text x="${x}" y="576">${d}</text>`;
            });

            let prev = 1240;
            candles.forEach(([c, h, l, o], i) => {
                const x = left + i * 4;
                const open = o || prev;
                const up = Math.min(open, c), down = Math.max(open, c);
                wicks += `M${x}.5 ${y(h || up - 5 - i % 3 * 3)}V${y(l || down + 3 + i % 4 * 3)}`;
                const a = y(up), b = Math.max(y(down), a + 1);
                bodies += `M${x - 1} ${a}h3V${b}h-3Z`;
                if (b - a > 2) cores += `<path d="M${x}.5 ${a + 1}V${b - 1}" stroke="${c < open ? "#000" : "#fff"}" />`;
                if (volumes[i]) bars += `M${x}.5 ${bottom}V${y(1448 - volumes[i])}`;
                prev = c;
            });

            const last = left + (candles.length - 1) * 4;
            const bid = y(223);
            chart.innerHTML = `
                <g fill="none" shape-rendering="crispEdges">
                    <path d="${grid}" stroke="#778899" stroke-dasharray="3 3" />
                    <path d="M${left} ${bid}.5H${right}" stroke="#778899" />
                    <path d="${bars}" stroke="#32cd32" />
                    <path d="${wicks}" stroke="#00ff00" />
                    <path d="${bodies}" fill="#00ff00" />
                    ${cores}
                    <path d="M${left}.5 ${top}.5H${right}.5V${bottom}.5H${left}.5Z${frame}" stroke="#fff" />
                </g>
                <path d="M${last - 9} ${top + 1}h19l-9 10Z" fill="#778899" />
                <g fill="#fff">${text}<text x="52" y="30" class="whitespace-pre">NZDUSD, H1:  New Zealand Dollar vs US Dollar</text></g>
                <rect x="${right + 3}" y="${bid - 11}" width="78" height="23" fill="#778899" />
                <text x="${right + 9}" y="${bid + 8}">0.58407</text>
                <g stroke-width="2">
                    <path d="M27 13H15Q13 13 13 15V31Q13 33 15 33H27Z" fill="#ffdbd3" stroke="#dc3732" />
                    <path d="M27 13H39Q41 13 41 15V31Q41 33 39 33H27Z" fill="#bbe1ff" stroke="#005ba1" />
                    <rect x="15" y="15" width="24" height="16" fill="none" stroke="#fff" />
                    <path d="M16 18.5H26M16 23.5H26M16 28.5H26" stroke="#dc3732" />
                    <path d="M28 18.5H38M28 23.5H38M28 28.5H38" stroke="#005ba1" />
                </g>`;
        }
        new ResizeObserver(drawChart).observe(chart);
    </script>
</body>

</html>
